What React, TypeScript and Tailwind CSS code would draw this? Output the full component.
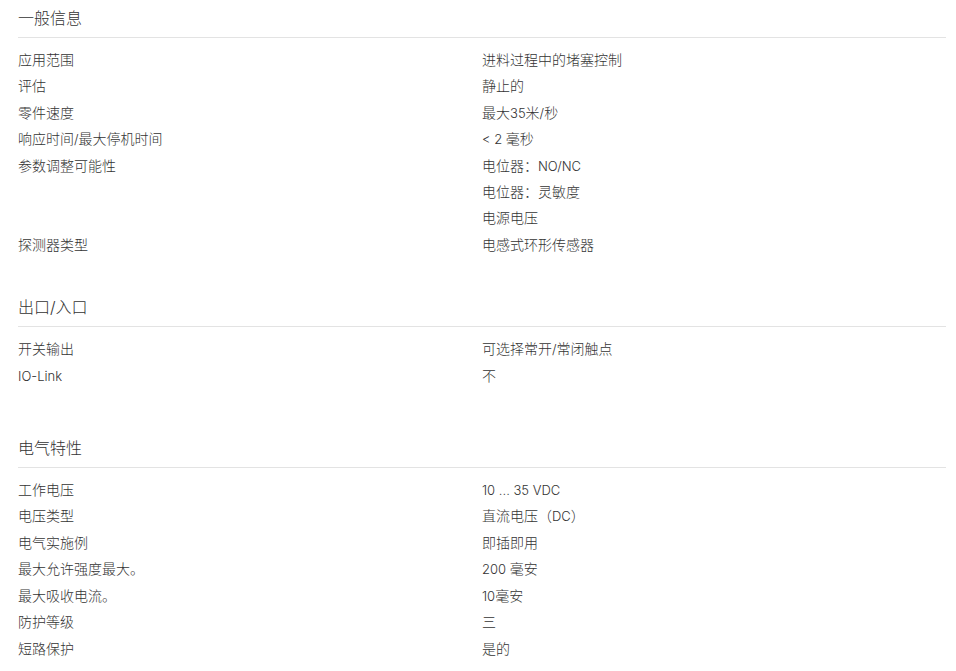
import React from "react";

const sections = [
  {
    title: "一般信息",
    rows: [
      ["应用范围", "进料过程中的堵塞控制"],
      ["评估", "静止的"],
      ["零件速度", "最大35米/秒"],
      ["响应时间/最大停机时间", "< 2 毫秒"],
      ["参数调整可能性", "电位器：NO/NC"],
      ["", "电位器：灵敏度"],
      ["", "电源电压"],
      ["探测器类型", "电感式环形传感器"],
    ],
  },
  {
    title: "出口/入口",
    rows: [
      ["开关输出", "可选择常开/常闭触点"],
      ["IO-Link", "不"],
    ],
  },
  {
    title: "电气特性",
    rows: [
      ["工作电压", "10 ... 35 VDC"],
      ["电压类型", "直流电压（DC）"],
      ["电气实施例", "即插即用"],
      ["最大允许强度最大。", "200 毫安"],
      ["最大吸收电流。", "10毫安"],
      ["防护等级", "三"],
      ["短路保护", "是的"],
    ],
  },
];

// CJK glyphs sit a touch larger than the latin text in the reference
const Txt = ({ t }: { t: string }) => (
  <>
    {t.split(/([\u3000-\u9fff\uff00-\uffef]+)/).map((p, k) =>
      /[\u3000-\u9fff\uff00-\uffef]/.test(p) ? (
        <span key={k} className="text-[14px] font-light">
          {p}
        </span>
      ) : (
        <span key={k} className="font-[350]">
          {p}
        </span>
      )
    )}
  </>
);

const App = () => {
  return (
    <div
      className="w-[956px] h-[671px] overflow-hidden bg-white pl-[18px] pr-[10px] text-[#333]"
      style={{ fontFamily: "Inter, 'Noto Sans CJK SC', sans-serif" }}
    >
      {sections.map((s, i) => (
        <section
          key={s.title}
          className={i === 0 ? "pt-[6px]" : i === 1 ? "pt-[37px]" : "pt-[47px]"}
        >
          <h2 className="text-[16px] leading-[24px] font-light pb-[7px] border-b border-[#e3e3e3]">
            {s.title}
          </h2>
          <div className="pt-[9px]">
            {s.rows.map((r, j) => (
              <div key={j} className="grid grid-cols-2 text-[13px] leading-[26.4px]">
                <div>
                  <Txt t={r[0]} />
                </div>
                <div>
                  <Txt t={r[1]} />
                </div>
              </div>
            ))}
          </div>
        </section>
      ))}
    </div>
  );
};

export default App;
